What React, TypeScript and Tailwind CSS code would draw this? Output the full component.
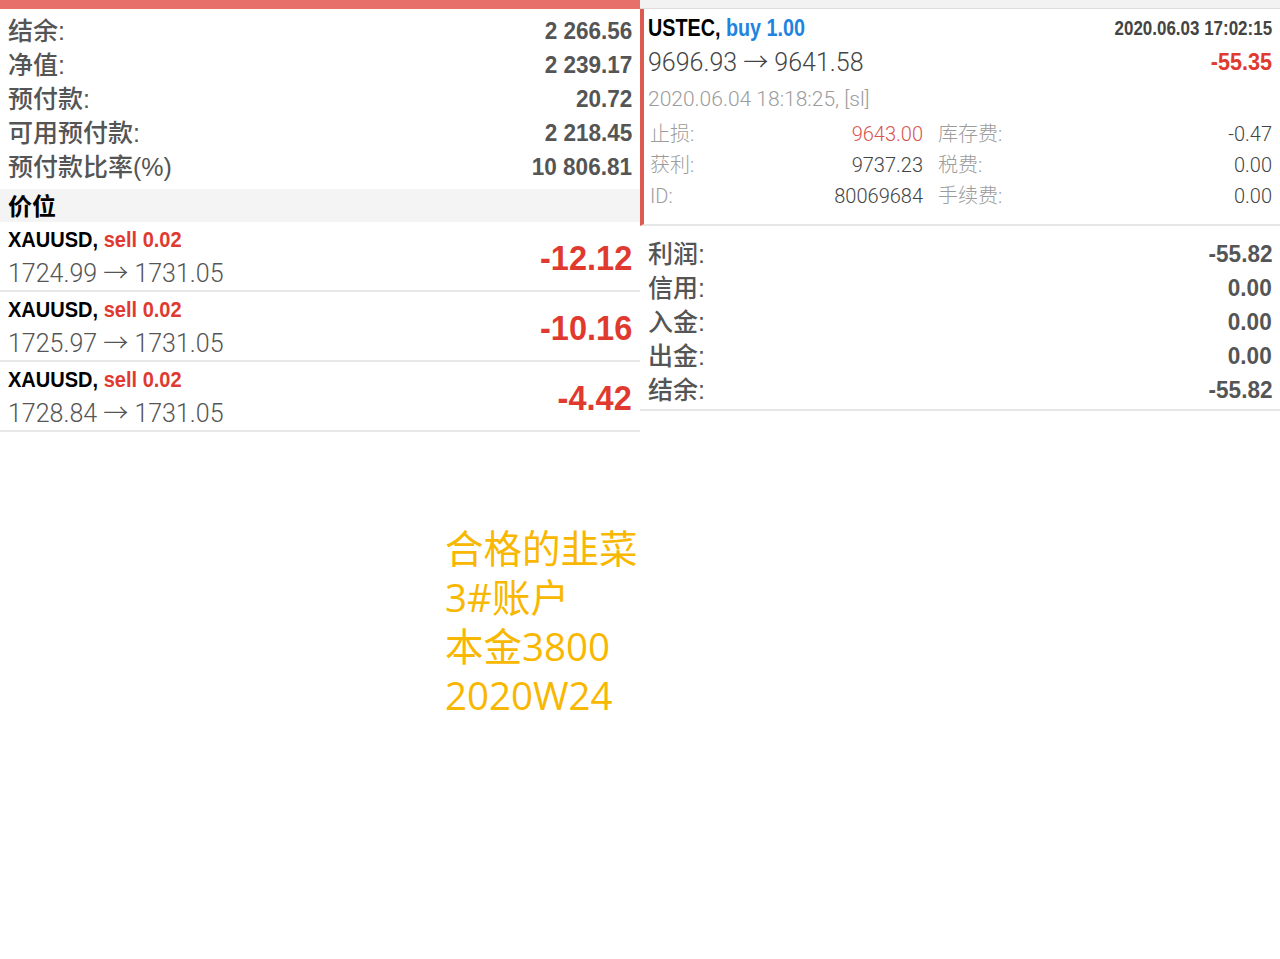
const sans = '"Liberation Sans", Arial, "Noto Sans CJK SC", sans-serif';
const light = 'Roboto, "Noto Sans CJK SC", sans-serif';

const summary = [
  ['结余:', '2 266.56'],
  ['净值:', '2 239.17'],
  ['预付款:', '20.72'],
  ['可用预付款:', '2 218.45'],
  ['预付款比率(%)', '10 806.81'],
];

const positions = [
  { open: '1724.99', cur: '1731.05', profit: '-12.12' },
  { open: '1725.97', cur: '1731.05', profit: '-10.16' },
  { open: '1728.84', cur: '1731.05', profit: '-4.42' },
];

const totals = [
  ['利润:', '-55.82'],
  ['信用:', '0.00'],
  ['入金:', '0.00'],
  ['出金:', '0.00'],
  ['结余:', '-55.82'],
];

const details = [
  ['止损:', '9643.00', '库存费:', '-0.47', true],
  ['获利:', '9737.23', '税费:', '0.00', false],
  ['ID:', '80069684', '手续费:', '0.00', false],
] as const;

function Line({ label, value }: { label: string; value: string }) {
  return (
    <div className="flex justify-between items-center h-[34px] pl-[8px] pr-[8px] text-[#555] leading-none">
      <span className="text-[25px] font-medium">{label}</span>
      <span className="text-[24.5px] font-bold whitespace-nowrap">
        <span className="inline-block scale-x-[0.92] origin-right">{value}</span>
      </span>
    </div>
  );
}

export default function App() {
  return (
    <div className="w-[1280px] h-[959px] bg-white overflow-hidden" style={{ fontFamily: sans }}>
      <div className="flex items-start">
        {/* left: account summary + positions */}
        <div className="w-[640px]">
          <div className="h-[9px] bg-[#e7706a]" />
          <div className="pt-[5px] pb-[5px]">
            {summary.map(([k, v]) => (
              <Line key={k} label={k} value={v} />
            ))}
          </div>
          <div className="h-[33px] bg-[#f4f4f4] flex items-center pl-[8px] pt-[2px] text-[24px] font-bold text-black leading-none">价位</div>
          {positions.map((p, i) => (
            <div key={i} className="flex justify-between items-center h-[70px] border-b-2 border-[#e8e8e8] pl-[8px] pr-[8px]">
              <div className="flex flex-col gap-[10px] pt-[3px]">
                <div className="h-[22px] text-[22.5px] leading-none font-bold text-black whitespace-nowrap">
                  <span className="inline-block scale-x-[0.89] origin-left">
                    XAUUSD, <span className="text-[#e03a30]">sell 0.02</span>
                  </span>
                </div>
                <div className="text-[25px] leading-none text-[#555]" style={{ fontFamily: light, fontWeight: 300 }}>
                  {p.open} → {p.cur}
                </div>
              </div>
              <div className="text-[35px] font-bold text-[#e03a30] leading-none pt-[2px]">
                <span className="inline-block scale-x-[0.93] origin-right">{p.profit}</span>
              </div>
            </div>
          ))}
        </div>

        {/* right: closed order + totals */}
        <div className="flex-1">
          <div className="h-[9px] bg-[#f2f2f2] border-b border-[#dcdcdc]" />
          <div className="border-l-4 border-l-[#dd5a50] pl-[4px] pr-[8px] pt-[5px] pb-[13px] border-b-2 border-b-[#e6e6e6]">
            <div className="flex justify-between items-center h-[30px]">
              <span className="text-[23.5px] font-bold text-black leading-none whitespace-nowrap">
                <span className="inline-block scale-x-[0.84] origin-left">
                  USTEC, <span className="text-[#1e84e0]">buy 1.00</span>
                </span>
              </span>
              <span className="text-[19.5px] font-bold text-[#444] leading-none whitespace-nowrap">
                <span className="inline-block scale-x-[0.87] origin-right">2020.06.03 17:02:15</span>
              </span>
            </div>
            <div className="flex justify-between items-center h-[36px]">
              <span className="text-[25px] text-[#444] leading-none" style={{ fontFamily: light, fontWeight: 300 }}>
                9696.93 → 9641.58
              </span>
              <span className="text-[24px] font-bold text-[#e03a30] leading-none whitespace-nowrap">
                <span className="inline-block scale-x-[0.9] origin-right">-55.35</span>
              </span>
            </div>
            <div className="h-[38px] flex items-center text-[21px] text-[#9c9c9c] leading-none" style={{ fontFamily: light, fontWeight: 300 }}>
              2020.06.04 18:18:25, [sl]
            </div>
            {details.map(([k1, v1, k2, v2, red]) => (
              <div key={k1} className="flex items-center h-[31px] text-[20px] leading-none" style={{ fontFamily: light, fontWeight: 300 }}>
                <span className="w-[92px] pl-[2px] text-[#9c9c9c]">{k1}</span>
                <span className={`w-[183px] text-right ${red ? 'text-[#d9534f]' : 'text-[#444]'}`}>{v1}</span>
                <span className="pl-[15px] text-[#9c9c9c]">{k2}</span>
                <span className="flex-1 text-right text-[#444]">{v2}</span>
              </div>
            ))}
          </div>
          <div className="pt-[11px] pb-[2px] border-b-2 border-[#e6e6e6]">
            {totals.map(([k, v], i) => (
              <Line key={i} label={k} value={v} />
            ))}
          </div>
        </div>
      </div>

      {/* caption */}
      <div
        className="ml-[445px] mt-[92px] text-[38.5px] leading-[49px] text-[#f8b700]"
        style={{ fontFamily: '"Open Sans", "Noto Sans CJK SC", sans-serif' }}
      >
        <div>合格的韭菜</div>
        <div>3#账户</div>
        <div>本金3800</div>
        <div>2020W24</div>
      </div>
    </div>
  );
}
